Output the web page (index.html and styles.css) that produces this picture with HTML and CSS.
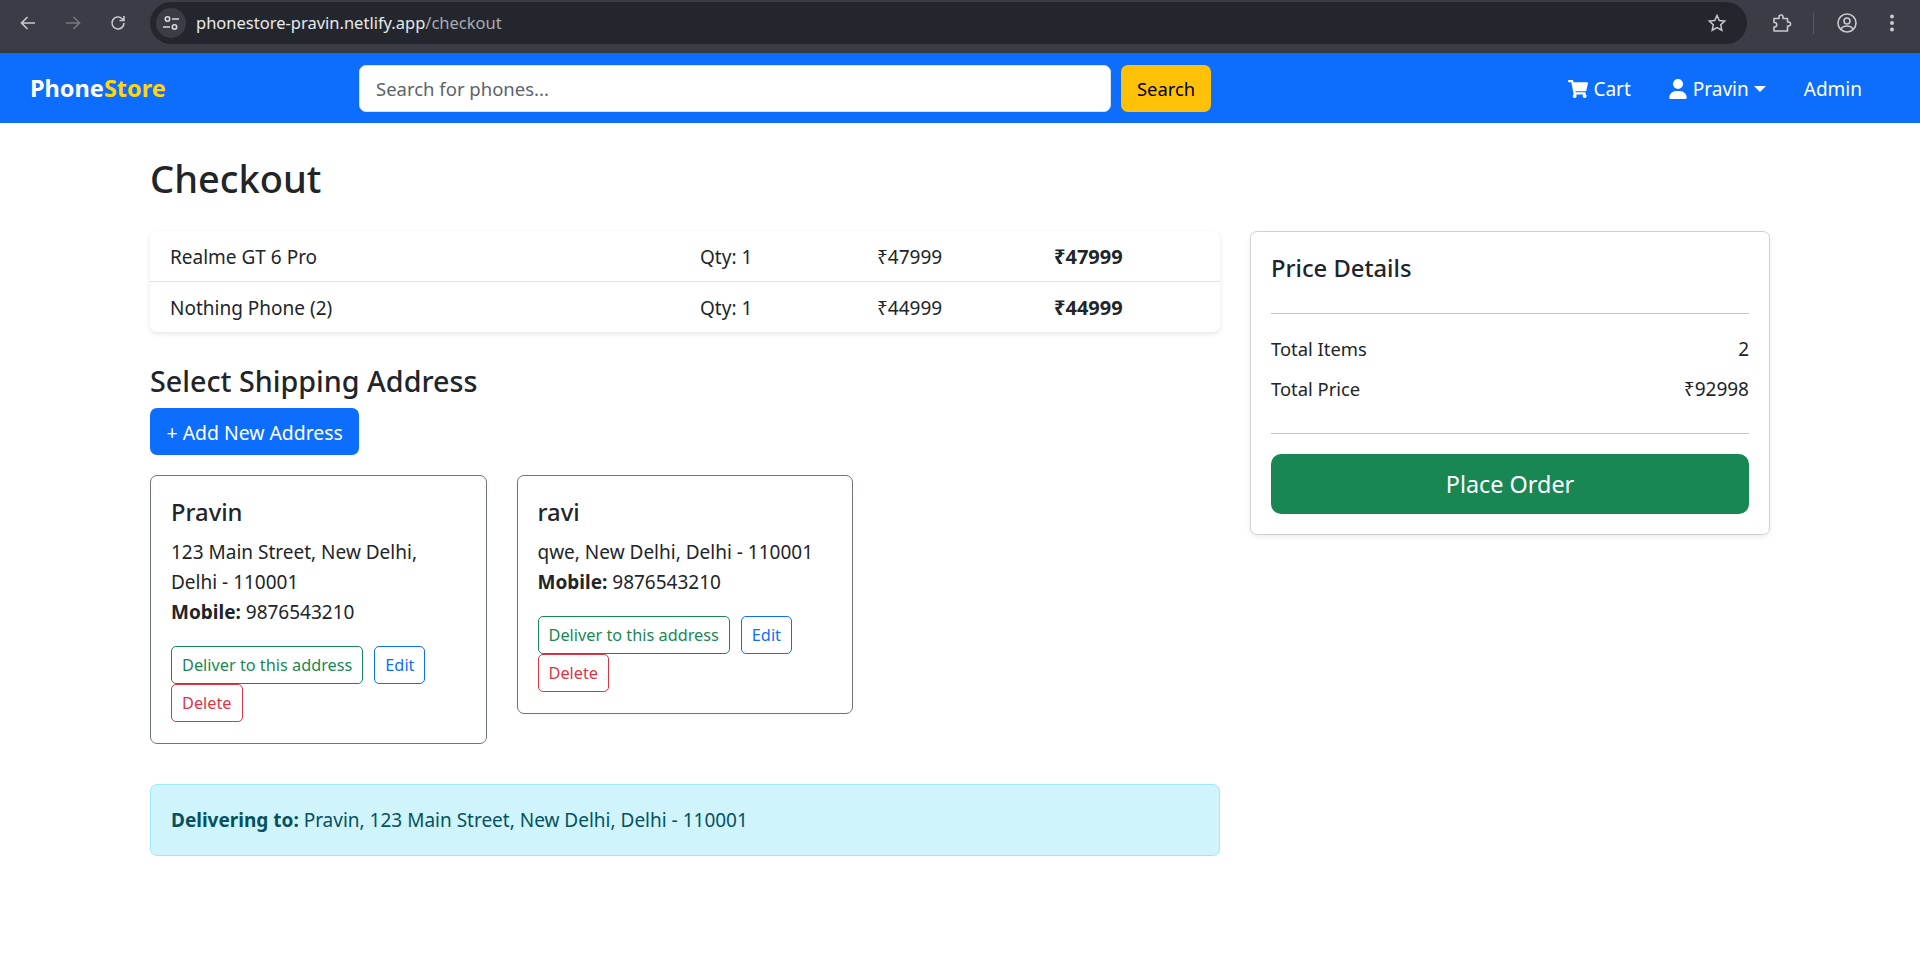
FILE: index.html
```html
<!DOCTYPE html>
<html lang="en">

<head>
    <meta charset="UTF-8">
    <meta name="viewport" content="width=device-width, initial-scale=1.0">
    <title>Checkout</title>
    <link rel="stylesheet" href="styles.css">
</head>

<body>
    <!-- browser toolbar -->
    <div class="toolbar">
        <svg class="tool-icon" viewBox="0 0 20 20"><path d="M17 10H4M9.500 4l-6 6 6 6" /></svg>
        <svg class="tool-icon tool-off" viewBox="0 0 20 20"><path d="M3 10h13M10.500 4l6 6-6 6" /></svg>
        <svg class="tool-icon" viewBox="0 0 20 20"><path d="M16 10a6 6 0 1 1-1.800-4.300L16 7.500M16 3v4.500h-4.500" /></svg>
        <div class="omnibox">
            <span class="site-chip">
                <svg viewBox="0 0 20 20"><circle cx="6.500" cy="6" r="2.200" /><path d="M11 6h7M2 14h7" /><circle cx="13.500" cy="14" r="2.200" /></svg>
            </span>
            <span class="url">phonestore-pravin.netlify.app<span class="url-path">/checkout</span></span>
            <svg class="star" viewBox="0 0 20 20"><path d="M10 2.500l2.300 5 5.400.6-4 3.700 1.100 5.400-4.800-2.700-4.800 2.700 1.100-5.400-4-3.700 5.400-.6z" /></svg>
        </div>
        <svg class="tool-icon puzzle" viewBox="0 0 20 20"><path d="M2 5.500H7V4a2 2 0 0 1 4 0v1.500h4.500V9h1a2 2 0 0 1 0 4h-1v5H2v-4h.5a2.200 2.200 0 0 0 0-4.500H2z" /></svg>
        <span class="tool-sep"></span>
        <svg class="tool-icon profile" viewBox="0 0 20 20"><circle cx="10" cy="10" r="9" /><circle cx="10" cy="8" r="3" /><path d="M4 15.800c1.500-2 3.500-2.800 6-2.800s4.500.8 6 2.800" /></svg>
        <svg class="dots" viewBox="0 0 18 18"><circle cx="9" cy="2.500" r="2" /><circle cx="9" cy="9" r="2" /><circle cx="9" cy="15.500" r="2" /></svg>
    </div>

    <nav class="navbar">
        <a class="brand" href="#">Phone<span class="brand-accent">Store</span></a>
        <form class="search">
            <input class="search-input" type="text" placeholder="Search for phones...">
            <button class="btn btn-yellow" type="button">Search</button>
        </form>
        <div class="nav-links">
            <a class="nav-link" href="#">
                <svg class="nav-icon" viewBox="0 0 576 512"><path d="M528.120 301.319l47.273-208C578.806 78.301 567.391 64 551.990 64H159.208l-9.166-44.810C147.758 8.021 137.930 0 126.529 0H24C10.745 0 0 10.745 0 24v16c0 13.255 10.745 24 24 24h69.883l70.248 343.435C147.325 417.100 136 435.222 136 456c0 30.928 25.072 56 56 56s56-25.072 56-56c0-15.674-6.447-29.835-16.824-40h209.647C430.447 426.165 424 440.326 424 456c0 30.928 25.072 56 56 56s56-25.072 56-56c0-22.172-12.888-41.332-31.579-50.405l5.517-24.276c3.413-15.018-8.002-29.319-23.403-29.319H218.117l-6.545-32h293.145c11.206 0 20.920-7.754 23.403-18.681z" /></svg>
                Cart
            </a>
            <a class="nav-link" href="#">
                <svg class="nav-icon user-icon" viewBox="0 0 448 512"><path d="M224 256a128 128 0 1 0 0-256 128 128 0 1 0 0 256zm-45.700 48C79.800 304 0 383.800 0 482.300 0 498.700 13.300 512 29.700 512h388.600c16.400 0 29.700-13.300 29.700-29.700 0-98.500-79.800-178.300-178.300-178.300h-91.400z" /></svg>
                Pravin<span class="caret"></span>
            </a>
            <a class="nav-link" href="#">Admin</a>
        </div>
    </nav>

    <main class="page">
        <h1 class="page-title">Checkout</h1>
        <div class="layout">
            <section class="left-col">
                <div class="cart-list">
                    <div class="cart-row">
                        <span class="cart-name">Realme GT 6 Pro</span>
                        <span class="cart-qty">Qty: 1</span>
                        <span class="cart-price">₹47999</span>
                        <strong class="cart-total">₹47999</strong>
                    </div>
                    <div class="cart-row">
                        <span class="cart-name">Nothing Phone (2)</span>
                        <span class="cart-qty">Qty: 1</span>
                        <span class="cart-price">₹44999</span>
                        <strong class="cart-total">₹44999</strong>
                    </div>
                </div>

                <h3 class="section-title">Select Shipping Address</h3>
                <button class="btn btn-blue">+ Add New Address</button>

                <div class="address-grid">
                    <div class="address-card">
                        <h5 class="address-name">Pravin</h5>
                        <p class="address-text">123 Main Street, New Delhi, Delhi - 110001<br><strong>Mobile:</strong> 9876543210</p>
                        <button class="btn-sm outline-green">Deliver to this address</button>
                        <button class="btn-sm outline-blue">Edit</button>
                        <button class="btn-sm outline-red">Delete</button>
                    </div>
                    <div class="address-card">
                        <h5 class="address-name">ravi</h5>
                        <p class="address-text">qwe, New Delhi, Delhi - 110001<br><strong>Mobile:</strong> 9876543210</p>
                        <button class="btn-sm outline-green">Deliver to this address</button>
                        <button class="btn-sm outline-blue">Edit</button>
                        <button class="btn-sm outline-red">Delete</button>
                    </div>
                </div>

                <div class="alert"><strong>Delivering to:</strong> Pravin, 123 Main Street, New Delhi, Delhi - 110001</div>
            </section>

            <aside class="price-card">
                <h5 class="price-title">Price Details</h5>
                <hr class="divider">
                <div class="price-row"><span class="price-label">Total Items</span><span>2</span></div>
                <div class="price-row"><span class="price-label">Total Price</span><span>₹92998</span></div>
                <hr class="divider divider-low">
                <button class="btn-order">Place Order</button>
            </aside>
        </div>
    </main>
</body>

</html>
```

FILE: styles.css
```css
* {
    box-sizing: border-box;
}

body {
    margin: 0;
    font-family: 'Noto Sans', 'Open Sans', sans-serif;
    font-size: 19px;
    line-height: 30px;
    color: #212529;
    background-color: #ffffff;
}

/* browser toolbar */
.toolbar {
    display: flex;
    align-items: center;
    height: 53px;
    padding: 0 0 5px 18px;
    background-color: #3b3d46;
    border-bottom: 2px solid #34363d;
}

.tool-icon {
    flex: none;
    width: 20px;
    height: 20px;
    margin-right: 25px;
    fill: none;
    stroke: #c8cacd;
    stroke-width: 1.600;
}

.tool-off {
    stroke: #77797e;
}

.omnibox {
    display: flex;
    flex: none;
    align-items: center;
    width: 1597px;
    height: 42px;
    margin-left: -3px;
    padding: 0 20px 0 6px;
    background-color: #24262d;
    border-radius: 21px;
}

.site-chip {
    display: flex;
    align-items: center;
    justify-content: center;
    width: 30px;
    height: 30px;
    border-radius: 50%;
    background-color: #3b3d46;
}

.site-chip svg {
    width: 20px;
    height: 20px;
    fill: none;
    stroke: #d8d9db;
    stroke-width: 1.600;
}

.url {
    margin-left: 10px;
    font-size: 16.500px;
    color: #e8e9eb;
}

.url-path {
    color: #a9abb0;
}

.star {
    width: 20px;
    height: 20px;
    margin-left: auto;
    fill: none;
    stroke: #c8cacd;
    stroke-width: 1.500;
}

.puzzle {
    margin-left: 25px;
    margin-right: 21px;
    stroke-linejoin: round;
}

.tool-sep {
    flex: none;
    width: 1px;
    height: 22px;
    margin-right: 23px;
    background-color: #55575e;
}

.profile {
    margin-right: 26px;
}

.dots {
    flex: none;
    width: 18px;
    height: 18px;
    fill: #c8cacd;
}

/* navbar */
.navbar {
    display: flex;
    align-items: center;
    height: 70px;
    padding: 0 30px;
    background-color: #0d6efd;
}

.brand {
    width: 329px;
    font-size: 23.500px;
    font-weight: 700;
    color: #ffffff;
    text-decoration: none;
}

.brand-accent {
    color: #ffd60a;
}

.search {
    display: flex;
    gap: 10px;
}

.search-input {
    width: 752px;
    height: 47px;
    padding: 0 16px;
    border: 1px solid #dee2e6;
    border-radius: 7px;
    font-family: inherit;
    font-size: 18.500px;
    color: #212529;
}

.search-input::placeholder {
    color: #5c636a;
}

.nav-links {
    display: flex;
    align-items: center;
    gap: 38px;
    margin-left: auto;
    margin-right: 28px;
    padding-top: 2px;
}

.nav-link {
    display: flex;
    align-items: center;
    color: #ffffff;
    text-decoration: none;
}

.nav-icon {
    width: 20px;
    height: 20px;
    margin-right: 5px;
    fill: #ffffff;
}

.user-icon {
    width: 18px;
    margin-right: 6px;
}

.caret {
    width: 0;
    height: 0;
    margin-left: 5px;
    border-top: 6px solid #ffffff;
    border-left: 6px solid transparent;
    border-right: 6px solid transparent;
}

/* buttons */
.btn {
    height: 47px;
    padding: 0 15px;
    border: 1px solid transparent;
    border-radius: 7px;
    font-family: inherit;
    font-size: 18.400px;
}

.btn-yellow {
    background-color: #ffc107;
    color: #000000;
}

.btn-blue {
    display: block;
    padding: 2px 15.500px 0;
    background-color: #0d6efd;
    color: #ffffff;
    font-size: 19.400px;
}

.btn-sm {
    height: 38px;
    padding: 0 10px;
    margin-right: 6px;
    border: 1px solid;
    border-radius: 5px;
    background: none;
    font-family: inherit;
    font-size: 16.300px;
    vertical-align: top;
}

.outline-green {
    color: #198754;
    border-color: #198754;
}

.outline-blue {
    color: #0d6efd;
    border-color: #0d6efd;
}

.outline-red {
    color: #dc3545;
    border-color: #dc3545;
}

/* page */
.page {
    padding: 31px 150px 0;
}

.page-title {
    margin: 0 0 29px;
    font-size: 38px;
    font-weight: 500;
    line-height: 48px;
}

.layout {
    display: flex;
    align-items: flex-start;
    gap: 30px;
}

.left-col {
    width: 1070px;
}

.cart-list {
    border-radius: 7px;
    box-shadow: 0 2px 5px rgba(0, 0, 0, 0.1);
}

.cart-row {
    display: grid;
    grid-template-columns: 530px 177px 177px 1fr;
    align-items: center;
    height: 50px;
    padding: 2px 20px 0;
}

.cart-row + .cart-row {
    height: 51px;
    border-top: 1px solid #dee2e6;
}

.cart-total {
    font-size: 20px;
}

.section-title {
    margin: 31px 0 9px;
    font-size: 28.700px;
    font-weight: 500;
    line-height: 36px;
}

.address-grid {
    display: flex;
    align-items: flex-start;
    gap: 30px;
    margin-top: 20px;
}

.address-card {
    width: 336.500px;
    padding: 21px 20px 21px;
    border: 1px solid #6c757d;
    border-radius: 7px;
}

.address-name {
    margin: 0 0 10px;
    font-size: 23.750px;
    font-weight: 500;
    line-height: 30px;
}

.address-text {
    margin: 0 0 19px;
}

.alert {
    margin-top: 40px;
    padding: 20px;
    border: 1px solid #9eeaf9;
    border-radius: 7px;
    background-color: #cff4fc;
    color: #055160;
}

/* price card */
.price-card {
    width: 520px;
    padding: 21px 20px 20px;
    border: 1px solid #cfd1d3;
    border-radius: 7px;
    box-shadow: 0 2px 5px rgba(0, 0, 0, 0.08);
}

.price-title {
    margin: 0 0 30px;
    font-size: 23.750px;
    font-weight: 500;
    line-height: 30px;
}

.divider {
    margin: 20px 0;
    border: 0;
    border-top: 1px solid #c4c5c6;
}

.price-row {
    display: flex;
    justify-content: space-between;
    margin-bottom: 10px;
}

.price-label {
    font-size: 18.400px;
}

.divider-low {
    margin-top: 29px;
}

.btn-order {
    display: block;
    width: 100%;
    height: 60px;
    border: 0;
    border-radius: 10px;
    background-color: #198754;
    color: #ffffff;
    font-family: inherit;
    font-size: 23.400px;
}
```
